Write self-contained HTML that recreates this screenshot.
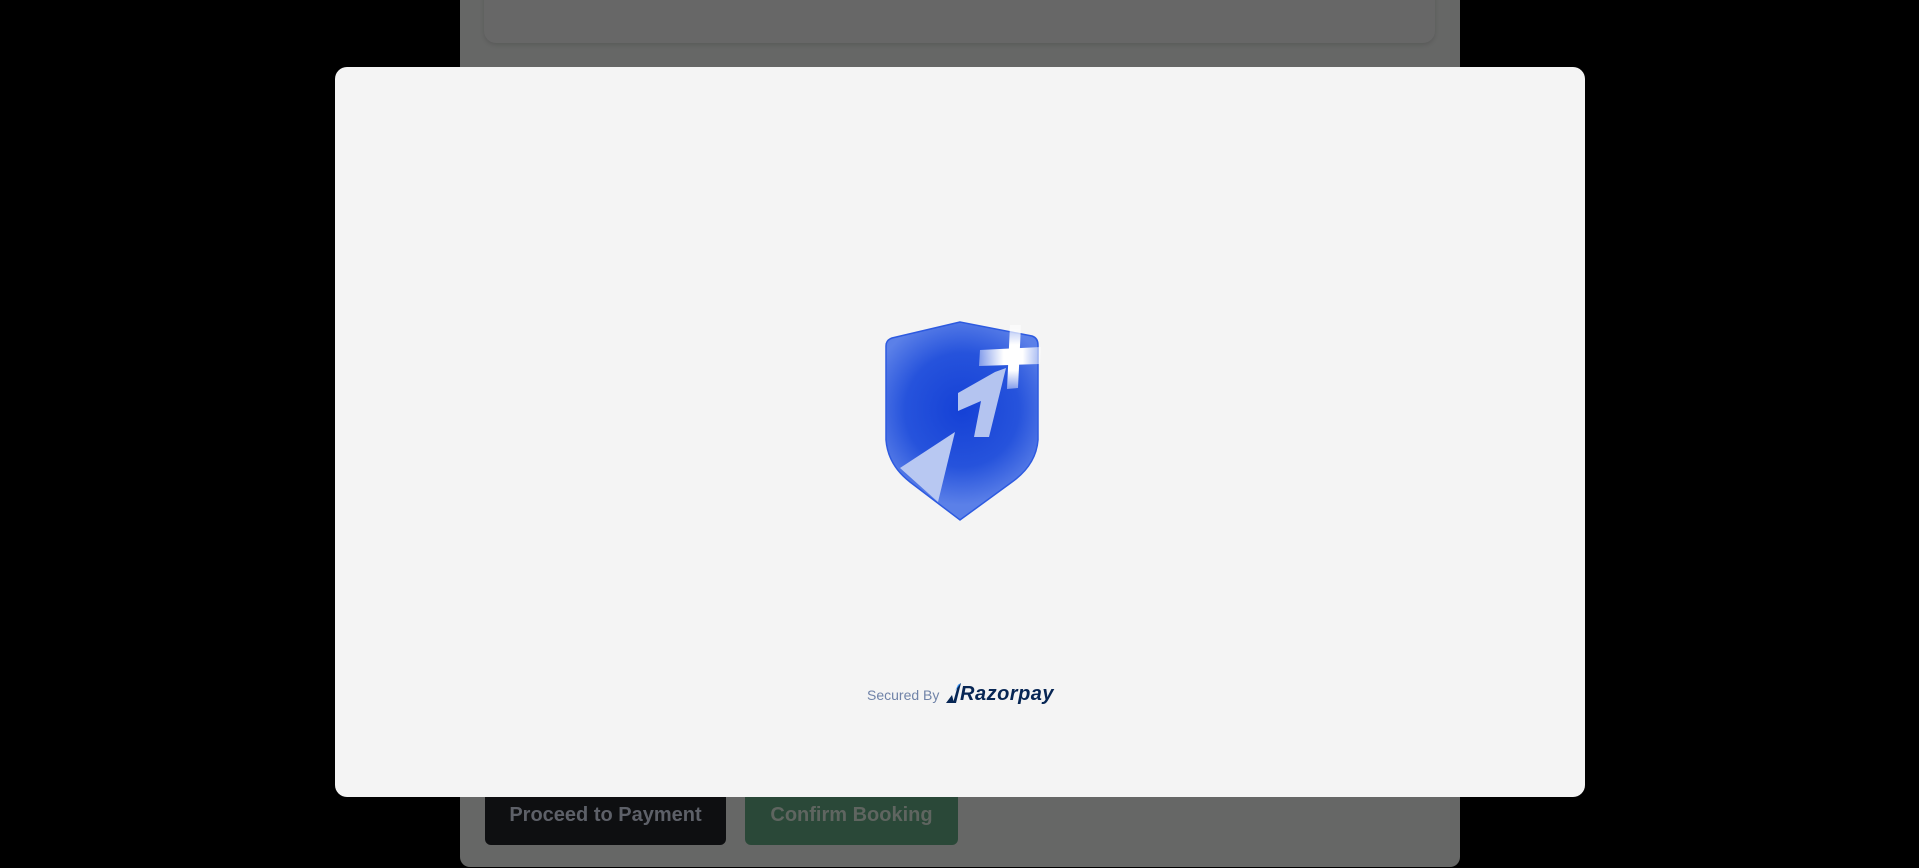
<!DOCTYPE html>
<html><head><meta charset="utf-8"><style>
html,body{margin:0;padding:0;width:1919px;height:868px;overflow:hidden;background:#000;font-family:"Liberation Sans",sans-serif}
.panel{position:absolute;left:460px;top:-20px;width:1000px;height:887px;background:#666766;border-radius:10px}
.card{position:absolute;left:484px;top:-20px;width:951px;height:63px;background:#676767;border-radius:12px;box-shadow:0 2px 4px rgba(0,0,0,.12)}
.btn{position:absolute;top:790px;height:55px;border-radius:6px;font-weight:bold;font-size:20px;text-align:center;line-height:50px;box-sizing:border-box}
.b1{left:485px;width:241px;background:#0e0f11;color:#5d6068}
.b2{left:745px;width:213px;background:#2a4838;color:#5f6560}
.modal{position:absolute;left:335px;top:67px;width:1250px;height:730px;background:#f4f4f4;border-radius:12px}
.sec{position:absolute;left:867px;top:687px;font-size:14px;color:#7083a8}
.rz{position:absolute;left:960px;top:683px;font-size:20px;font-weight:bold;font-style:italic;color:#072654;letter-spacing:.5px}
</style></head><body>
<div class="panel"></div>
<div class="card"></div>
<div class="btn b1">Proceed to Payment</div>
<div class="btn b2">Confirm Booking</div>
<div class="modal"></div>
<svg style="position:absolute;left:0;top:0" width="1919" height="868">
<defs>
<radialGradient id="g" cx="962" cy="410" r="95" gradientUnits="userSpaceOnUse">
<stop offset="0" stop-color="#1541d6"/><stop offset=".6" stop-color="#2653dc"/><stop offset="1" stop-color="#5b80e8"/>
</radialGradient>
<linearGradient id="h" x1="978" x2="1042" y1="0" y2="0" gradientUnits="userSpaceOnUse">
<stop offset="0" stop-color="#fff" stop-opacity=".4"/><stop offset=".4" stop-color="#fff"/><stop offset=".7" stop-color="#fff"/><stop offset="1" stop-color="#fff" stop-opacity=".4"/>
</linearGradient>
<linearGradient id="v" x1="0" x2="0" y1="325" y2="390" gradientUnits="userSpaceOnUse">
<stop offset="0" stop-color="#fff" stop-opacity=".5"/><stop offset=".3" stop-color="#fff"/><stop offset=".7" stop-color="#fff"/><stop offset="1" stop-color="#fff" stop-opacity=".4"/>
</linearGradient>
</defs>
<path d="M960 322 L892 338 Q886 340 886 346 L886 440 Q888 465 910 482 L960 520 L1012 482 Q1036 465 1038 440 L1038 345 Q1038 338 1032 336 Z" fill="url(#g)" stroke="#2d5ae0" stroke-width="1.5"/>
<path d="M900 468 L955 432 L938 502 Z" fill="#b8c8f2"/>
<path d="M958 393 L995 372 L1006 368 L989 437 L974 437 L981 401 L958 411 Z" fill="#b4c4f0"/>
<path d="M980 350 L1041 347 L1040 364 L979 366 Z" fill="url(#h)"/>
<path d="M1010 325 L1021 325 L1018 388 L1007 389 Z" fill="url(#v)"/>
</svg>
<div class="sec">Secured By</div>
<svg style="position:absolute;left:944px;top:683px" width="18" height="22"><path d="M2 20 L8 12 L10 20 Z M9 20 L14 2 L17 0 L12 20 Z" fill="#072654"/><path d="M9 12 L14 2 L17 0 L11 8 Z" fill="#3395ff"/></svg>
<div class="rz">Razorpay</div>
</body></html>
